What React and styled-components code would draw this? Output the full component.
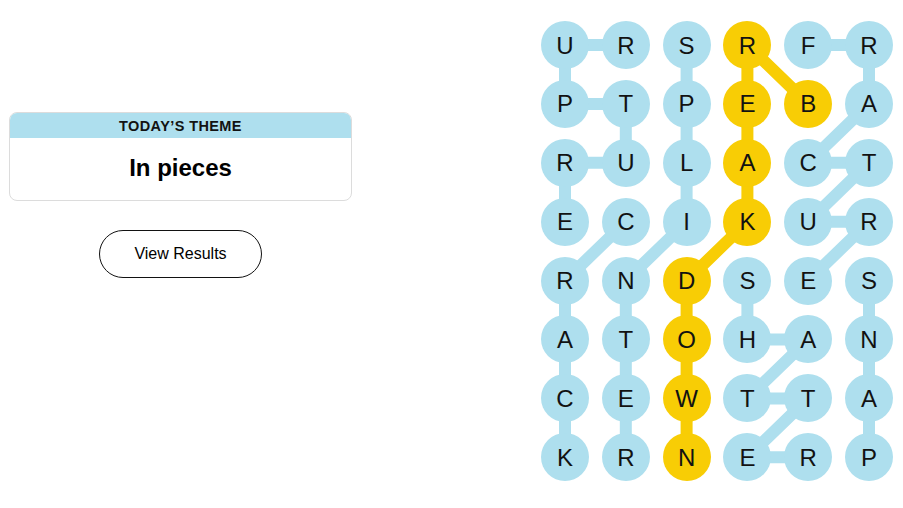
import React from 'react';
import styled, { createGlobalStyle } from 'styled-components';

const BLUE = '#aedfee';
const YELLOW = '#f8cd05';

const COL = 60.8;
const ROW = 58.9;
const R = 24;

const letters = [
    'URSRFR',
    'PTPEBA',
    'RULACT',
    'ECIKUR',
    'RNDSES',
    'ATOHAN',
    'CEWTTA',
    'KRNERP'
];

// words as paths of [row, col]
const words = [
    { found: false, cells: [[0, 1], [0, 0], [1, 0], [1, 1], [2, 1], [2, 0], [3, 0]] },
    { found: false, cells: [[3, 1], [4, 0], [5, 0], [6, 0], [7, 0]] },
    { found: false, cells: [[0, 2], [1, 2], [2, 2], [3, 2], [4, 1], [5, 1], [6, 1], [7, 1]] },
    { found: true, cells: [[1, 4], [0, 3], [1, 3], [2, 3], [3, 3], [4, 2], [5, 2], [6, 2], [7, 2]] },
    { found: false, cells: [[0, 4], [0, 5], [1, 5], [2, 4], [2, 5], [3, 4], [3, 5], [4, 4]] },
    { found: false, cells: [[4, 3], [5, 3], [5, 4], [6, 3], [6, 4], [7, 3], [7, 4]] },
    { found: false, cells: [[4, 5], [5, 5], [6, 5], [7, 5]] }
];

const spangram = new Set(words.filter(w => w.found).flatMap(w => w.cells.map(([r, c]) => `${r}-${c}`)));

const GlobalStyle = createGlobalStyle`
    html, body {
        margin: 0;
        padding: 0;
        background: #ffffff;
        font-family: "Liberation Sans", Arial, sans-serif;
        color: #000;
    }
`;

const Page = styled.div`
    width: 903px;
    height: 508px;
    display: flex;
    align-items: flex-start;
    overflow: hidden;
`;

const Side = styled.div`
    width: 343px;
    margin-left: 9px;
    margin-top: 112px;
    display: flex;
    flex-direction: column;
    align-items: center;
`;

const ThemeCard = styled.div`
    width: 100%;
    box-sizing: border-box;
    border: 1px solid #dcdcdc;
    border-radius: 8px;
    overflow: hidden;
    display: flex;
    flex-direction: column;
`;

const ThemeHeader = styled.div`
    height: 25px;
    background: ${BLUE};
    display: flex;
    align-items: center;
    justify-content: center;
    font-size: 14.5px;
    font-weight: 700;
    letter-spacing: 0.4px;
    color: #121212;
    padding-top: 1px;
    box-sizing: border-box;
`;

const ThemeBody = styled.div`
    height: 62px;
    display: flex;
    align-items: center;
    justify-content: center;
    font-size: 24px;
    font-weight: 700;
    color: #000;
    padding-bottom: 3px;
    box-sizing: border-box;
`;

const ResultsButton = styled.button`
    margin-top: 29px;
    width: 163px;
    height: 48px;
    border: 1px solid #121212;
    border-radius: 24px;
    background: #fff;
    font-family: "Liberation Sans", Arial, sans-serif;
    font-size: 16px;
    color: #000;
    cursor: pointer;
`;

const Board = styled.div`
    position: relative;
    margin-left: auto;
    margin-right: 10px;
    margin-top: 21px;
    display: grid;
    grid-template-columns: repeat(6, ${R * 2}px);
    grid-auto-rows: ${R * 2}px;
    column-gap: ${COL - R * 2}px;
    row-gap: ${ROW - R * 2}px;
`;

const Links = styled.svg`
    position: absolute;
    left: 0;
    top: 0;
    overflow: visible;
    pointer-events: none;
`;

const Cell = styled.div`
    position: relative;
    width: ${R * 2}px;
    height: ${R * 2}px;
    border-radius: 50%;
    background: ${p => (p.$found ? YELLOW : BLUE)};
    display: flex;
    align-items: center;
    justify-content: center;
    font-size: 24px;
    color: #121212;
    padding-top: 1px;
    box-sizing: border-box;
`;

const cx = c => R + c * COL;
const cy = r => R + r * ROW;

export default function App() {
    return (
        <Page>
            <GlobalStyle />
            <Side>
                <ThemeCard>
                    <ThemeHeader>TODAY’S THEME</ThemeHeader>
                    <ThemeBody>In pieces</ThemeBody>
                </ThemeCard>
                <ResultsButton>View Results</ResultsButton>
            </Side>
            <Board>
                <Links width={COL * 5 + R * 2} height={ROW * 7 + R * 2}>
                    {words.map((w, i) => (
                        <polyline
                            key={i}
                            points={w.cells.map(([r, c]) => `${cx(c)},${cy(r)}`).join(' ')}
                            fill="none"
                            stroke={w.found ? YELLOW : BLUE}
                            strokeWidth="12"
                            strokeLinejoin="round"
                        />
                    ))}
                </Links>
                {letters.map((row, r) =>
                    row.split('').map((ch, c) => (
                        <Cell key={`${r}-${c}`} $found={spangram.has(`${r}-${c}`)}>
                            {ch}
                        </Cell>
                    ))
                )}
            </Board>
        </Page>
    );
}
